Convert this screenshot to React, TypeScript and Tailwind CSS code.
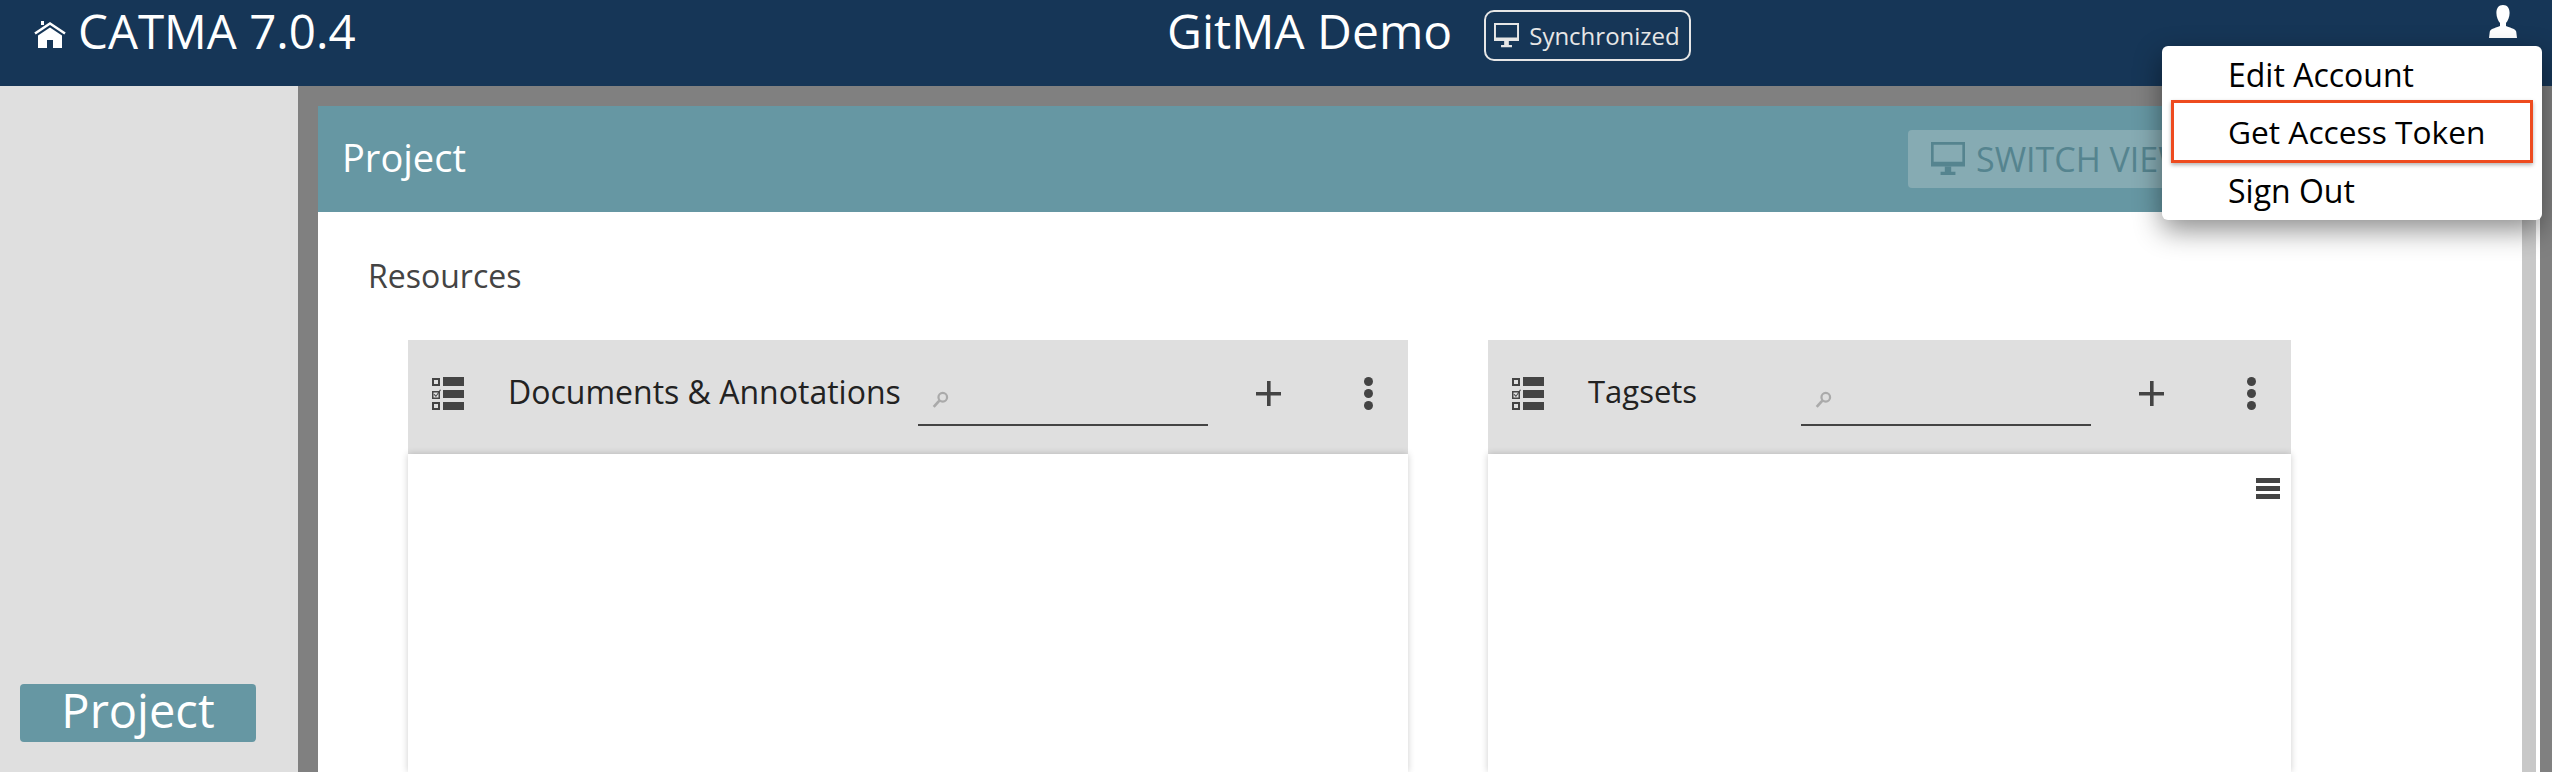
const font = { fontFamily: '"Open Sans", sans-serif' };

function HomeIcon() {
  return (
    <svg className="mt-5 shrink-0" width="32" height="28" viewBox="0 0 32 28" fill="white">
      <path d="M7 1h3v4H7z" />
      <path d="M1 13.5 16 3.500l15 10" fill="none" stroke="white" strokeWidth="2.6" />
      <path d="M4 15.5 16 7.500l12 8V28h-9v-8h-6v8H4z" />
    </svg>
  );
}

function MonitorIcon({ className }: { className: string }) {
  return (
    <svg className={className} viewBox="0 0 32 32" fill="currentColor">
      <path fillRule="evenodd" d="M0 0h32v23H0zM2.500 2.500v16h27v-16z" />
      <path d="M13 23h6v5h4v3H9v-3h4z" />
    </svg>
  );
}

function UserIcon() {
  return (
    <svg width="28" height="33" viewBox="0 0 28 33" fill="white">
      <path d="M14 0c4.600 0 6.600 3.400 6.600 8 0 4-1.800 8-3.600 10v3c2.600 1.500 9.400 2.400 10.200 5.600L28 33H0l.8-6.400C1.600 23.400 8.400 22.500 11 21v-3C9.200 16 7.400 12 7.400 8 7.400 3.400 9.400 0 14 0z" />
    </svg>
  );
}

function ChecklistIcon() {
  return (
    <svg width="32" height="33" viewBox="0 0 32 33" fill="#444444">
      <path fillRule="evenodd" d="M0 1h8v8H0zM2 3v4h4V3z" />
      <path d="M11 0h21v9H11zM11 13h21v8H11zM11 25h21v8H11z" />
      <path fillRule="evenodd" d="M0 14h8v8H0zM1.500 15.500v5h5v-5z" />
      <path d="M2.500 17l1.500 1.500L8 12.500l1 .5-5 7-2.500-2.500z" />
      <path fillRule="evenodd" d="M0 25h8v8H0zM2 27v4h4v-4z" />
    </svg>
  );
}

function SearchIcon() {
  return (
    <svg className="-mt-px" width="17" height="17" viewBox="0 0 15 15" fill="none" stroke="#aaaaaa">
      <circle cx="9.500" cy="5.500" r="3.800" strokeWidth="2" />
      <path d="M6.500 8.500 1.500 14" strokeWidth="2.400" />
    </svg>
  );
}

function PlusIcon() {
  return (
    <svg width="25" height="25" viewBox="0 0 25 25" fill="#444444">
      <path d="M11 0h3.600v11H25v3.600H14.600V25H11V14.600H0V11h11z" />
    </svg>
  );
}

function KebabIcon() {
  return (
    <div className="flex w-[9px] flex-col gap-[3px]">
      <div className="h-[9px] w-[9px] rounded-full bg-[#444444]" />
      <div className="h-[9px] w-[9px] rounded-full bg-[#444444]" />
      <div className="h-[9px] w-[9px] rounded-full bg-[#444444]" />
    </div>
  );
}

function ResourcePanel({
  title,
  width,
  titleClass,
  children,
}: {
  title: string;
  width: string;
  titleClass: string;
  children?: React.ReactNode;
}) {
  return (
    <div className={`flex shrink-0 flex-col ${width}`}>
      <div className="flex h-[114px] shrink-0 items-center bg-[#dfdfdf] pb-2 pl-6 pr-[35px]">
        <ChecklistIcon />
        <div className={`ml-[44px] mb-[3px] shrink-0 leading-none whitespace-nowrap text-[#222222] ${titleClass}`}>
          {title}
        </div>
        <div className="mt-[31px] flex h-[34px] w-[290px] shrink-0 items-start border-b-2 border-[#444444] pl-[14px]">
          <SearchIcon />
        </div>
        <div className="ml-[48px]">
          <PlusIcon />
        </div>
        <div className="ml-auto">
          <KebabIcon />
        </div>
      </div>
      <div className="relative flex-1 bg-white shadow-[0_0_7px_rgba(0,0,0,0.2)]">{children}</div>
    </div>
  );
}

export default function App() {
  return (
    <div className="relative flex h-screen flex-col overflow-hidden bg-[#808080]" style={font}>
      {/* Top bar */}
      <header className="flex h-[86px] shrink-0 bg-[#163657] text-white">
        <div className="flex w-[1167px] shrink-0 items-start pl-[34px]">
          <HomeIcon />
          <span className="ml-[12px] text-[47.5px] leading-[62px]">CATMA 7.0.4</span>
        </div>
        <div className="text-[48px] leading-[62px]">GitMA Demo</div>
        <div className="ml-[32px] mt-[10px] flex h-[51px] w-[207px] items-center gap-[10px] rounded-[10px] border-2 border-[#e6e6e6] pl-[8px] text-[24px] text-[#e6e6e6]">
          <MonitorIcon className="h-[25px] w-[25px]" />
          Synchronized
        </div>
        <div className="ml-auto mr-[35px] mt-[5px]">
          <UserIcon />
        </div>
      </header>

      <div className="flex min-h-0 flex-1">
        {/* Left nav */}
        <aside className="flex w-[298px] shrink-0 flex-col justify-end bg-[#dfdfdf] pb-[30px] pl-5">
          <div className="flex h-[58px] w-[236px] items-center justify-center rounded bg-[#6697a3] pb-[6px] text-[47px] leading-none text-white">
            Project
          </div>
        </aside>

        {/* Main area */}
        <main className="ml-5 mr-3 mt-5 flex min-w-0 flex-1 flex-col">
          <div className="flex h-[106px] shrink-0 items-center bg-[#6697a3] pl-6 text-white">
            <span className="mb-[3px] w-[1566px] shrink-0 text-[38px]">Project</span>
            <div className="flex h-[58px] w-[300px] shrink-0 items-center gap-[11px] rounded bg-[#86abb3] pl-[23px] text-[34px] whitespace-nowrap text-[#55848f]">
              <MonitorIcon className="h-[34px] w-[34px]" />
              SWITCH VIEW
            </div>
          </div>

          <div className="relative flex min-h-0 flex-1 flex-col bg-white pl-[50px] pt-[43px]">
            <div className="text-[32px] leading-[42px] text-[#444444]">Resources</div>
            <div className="ml-10 mt-[43px] flex min-h-0 flex-1 gap-20">
              <ResourcePanel title="Documents & Annotations" width="w-[1000px]" titleClass="w-[410px] text-[32px]" />
              <ResourcePanel title="Tagsets" width="w-[803px]" titleClass="w-[213px] text-[31px]">
                <div className="absolute right-[11px] top-[24px] flex w-6 flex-col gap-[3px]">
                  <div className="h-[5px] bg-[#444444]" />
                  <div className="h-[5px] bg-[#444444]" />
                  <div className="h-[5px] bg-[#444444]" />
                </div>
              </ResourcePanel>
            </div>
            {/* Scrollbar */}
            <div className="absolute bottom-0 right-1 top-0 w-[14px] bg-[#c8c8c8]" />
          </div>
        </main>
      </div>

      {/* Account menu */}
      <div className="absolute left-[2162px] top-[46px] flex h-[174px] w-[380px] flex-col rounded-md bg-white pt-[3px] text-[32px] text-black shadow-[0_10px_28px_rgba(0,0,0,0.45)]">
        <div className="flex h-[51px] shrink-0 items-center pl-[66px]">Edit Account</div>
        <div className="mx-[9px] flex h-[63px] shrink-0 items-center border-[3px] border-[#ee4b1f] pl-[54px] text-[31.7px] shadow-[0_2px_4px_rgba(0,0,0,0.3)]">
          Get Access Token
        </div>
        <div className="flex h-[55px] shrink-0 items-center pl-[66px]">Sign Out</div>
      </div>
    </div>
  );
}
